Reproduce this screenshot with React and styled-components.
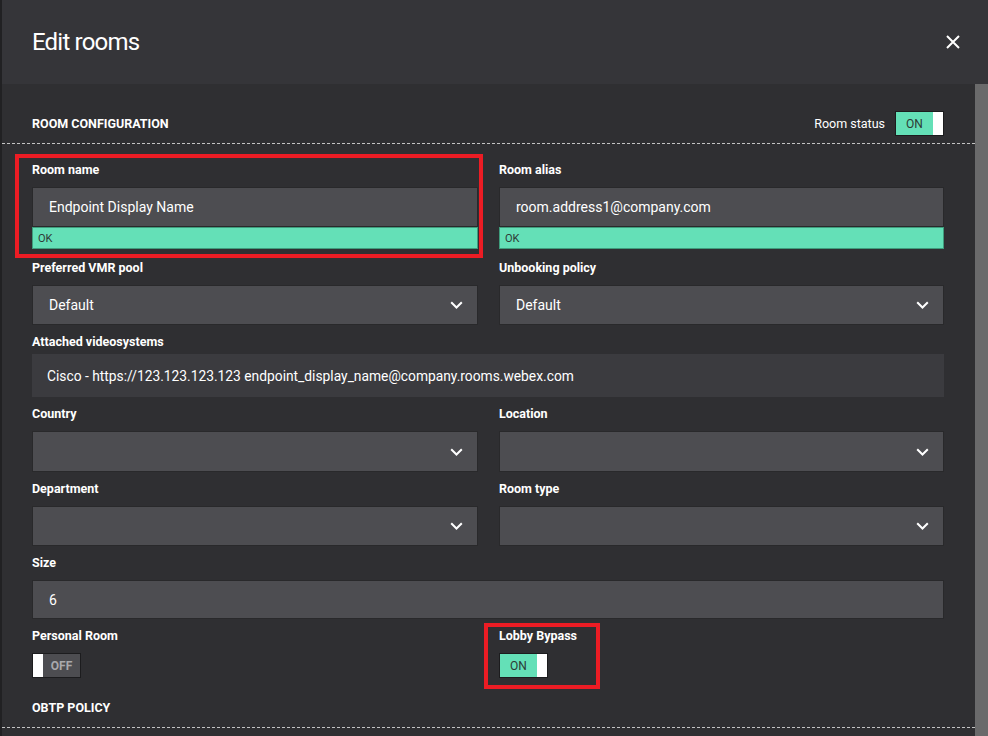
import React from "react";
import styled, { createGlobalStyle } from "styled-components";

const Global = createGlobalStyle`
  html, body { margin: 0; padding: 0; background: #2f2f32; overflow: hidden; }
  body { font-family: Roboto, "Noto Sans", Arial, sans-serif; color: #fff; }
  * { box-sizing: border-box; }
`;

const Page = styled.div`
  display: flex;
  width: 988px;
  height: 736px;
  background: #2f2f32;
`;

const Backdrop = styled.div`
  width: 2px;
  flex: none;
  background: #212123;
`;

const Modal = styled.div`
  flex: 1;
  display: flex;
  flex-direction: column;
  min-width: 0;
`;

const Header = styled.header`
  height: 84px;
  flex: none;
  background: #353539;
  display: flex;
  align-items: center;
  justify-content: space-between;
  padding: 0 28px 0 30px;
`;

const Title = styled.h1`
  margin: 0;
  font-size: 24px;
  font-weight: 400;
  letter-spacing: -0.8px;
  color: #fff;
  line-height: 28px;
`;

const CloseButton = styled.button`
  background: none;
  border: 0;
  padding: 0;
  width: 14px;
  height: 14px;
  display: flex;
  cursor: pointer;
`;

const Body = styled.div`
  flex: 1;
  display: flex;
  min-height: 0;
`;

const Content = styled.div`
  flex: 1;
  min-width: 0;
  overflow: hidden;
`;

const Scrollbar = styled.div`
  width: 13px;
  flex: none;
  background: #6a6a6b;
`;

const SectionHead = styled.div`
  display: flex;
  align-items: center;
  justify-content: space-between;
  padding: ${(p) => p.$pt}px 31px ${(p) => p.$pb}px 30px;
  border-bottom: 1px dashed #c4c4c4;
`;

const SectionTitle = styled.h2`
  margin: 0;
  font-size: 12.5px;
  font-weight: 700;
  text-transform: uppercase;
  color: #fff;
  line-height: 16px;
`;

const StatusGroup = styled.div`
  display: flex;
  align-items: center;
  gap: 10px;
  font-size: 12.5px;
  color: #fff;
`;

const Grid = styled.div`
  display: grid;
  grid-template-columns: 446px 445px;
  column-gap: 21px;
  row-gap: 9px;
  padding: 18px 31px 22px 30px;
`;

const Field = styled.div`
  position: relative;
  grid-column: ${(p) => (p.$wide ? "1 / -1" : "auto")};
  display: flex;
  flex-direction: column;
  align-items: flex-start;
`;

const Highlight = styled.div`
  position: absolute;
  left: ${(p) => p.$l}px;
  top: ${(p) => p.$t}px;
  width: ${(p) => p.$w}px;
  height: ${(p) => p.$h}px;
  border: 4px solid #ec1c24;
  pointer-events: none;
`;

const Label = styled.label`
  font-size: 12.5px;
  font-weight: 700;
  line-height: 16px;
  color: #fff;
  margin-bottom: ${(p) => p.$mb ?? 9}px;
`;

const Input = styled.div`
  width: 100%;
  height: ${(p) => p.$h ?? 40}px;
  flex: none;
  background: #4d4d51;
  border: 1px solid #29292b;
  display: flex;
  align-items: center;
  justify-content: space-between;
  padding: 0 14px 0 16px;
  font-size: 14px;
  color: #fff;
`;

const Chevron = styled.svg`
  width: 13px;
  height: 8px;
  flex: none;
`;

const StaticBox = styled.div`
  width: 100%;
  height: 43px;
  background: #3b3b3f;
  display: flex;
  align-items: center;
  padding: 0 15px;
  font-size: 13.8px;
  color: #fff;
`;

const Status = styled.div`
  width: 100%;
  height: 22px;
  background: #64e0b7;
  border: 1px solid #3f9c7c;
  display: flex;
  align-items: center;
  padding: 0 5px;
  font-size: 11px;
  color: #2f3a36;
  margin-bottom: 2px;
`;

const Toggle = styled.div`
  width: 49px;
  height: 25px;
  border: 1px solid #1c1c1e;
  display: flex;
  flex-direction: ${(p) => (p.$on ? "row" : "row-reverse")};
  background: ${(p) => (p.$on ? "#64e0b7" : "#4d4d51")};
`;

const ToggleText = styled.span`
  flex: 1;
  display: flex;
  align-items: center;
  justify-content: center;
  font-size: 12px;
  font-weight: ${(p) => (p.$on ? 400 : 700)};
  color: ${(p) => (p.$on ? "#2d3a35" : "#a9a9ac")};
`;

const Knob = styled.span`
  width: 10px;
  flex: none;
  background: #fff;
`;

const Switch = ({ on }) => (
  <Toggle $on={on}>
    <ToggleText $on={on}>{on ? "ON" : "OFF"}</ToggleText>
    <Knob />
  </Toggle>
);

const ChevronIcon = () => (
  <Chevron viewBox="0 0 13 8">
    <path d="M1.2 1.2 L6.5 6.5 L11.8 1.2" fill="none" stroke="#fff" strokeWidth="2" />
  </Chevron>
);

const Select = ({ value, h }) => (
  <Input $h={h}>
    <span>{value}</span>
    <ChevronIcon />
  </Input>
);

export default function App() {
  return (
    <>
      <Global />
      <Page>
        <Backdrop />
        <Modal>
          <Header>
            <Title>Edit rooms</Title>
            <CloseButton aria-label="Close">
              <svg width="14" height="14" viewBox="0 0 14 14">
                <path d="M1 1 L13 13 M13 1 L1 13" stroke="#fff" strokeWidth="2" fill="none" />
              </svg>
            </CloseButton>
          </Header>
          <Body>
            <Content>
              <SectionHead $pt={27} $pb={7}>
                <SectionTitle>Room configuration</SectionTitle>
                <StatusGroup>
                  Room status
                  <Switch on />
                </StatusGroup>
              </SectionHead>
              <Grid>
                <Field>
                  <Highlight $l={-17} $t={-8} $w={468} $h={104} />
                  <Label>Room name</Label>
                  <Input $h={40}>Endpoint Display Name</Input>
                  <Status>OK</Status>
                </Field>
                <Field>
                  <Label>Room alias</Label>
                  <Input $h={40}>room.address1@company.com</Input>
                  <Status>OK</Status>
                </Field>
                <Field>
                  <Label>Preferred VMR pool</Label>
                  <Select value="Default" h={40} />
                </Field>
                <Field>
                  <Label>Unbooking policy</Label>
                  <Select value="Default" h={40} />
                </Field>
                <Field $wide>
                  <Label $mb={4}>Attached videosystems</Label>
                  <StaticBox>
                    Cisco - https://123.123.123.123 endpoint_display_name@company.rooms.webex.com
                  </StaticBox>
                </Field>
                <Field>
                  <Label>Country</Label>
                  <Select value="" h={41} />
                </Field>
                <Field>
                  <Label>Location</Label>
                  <Select value="" h={41} />
                </Field>
                <Field>
                  <Label>Department</Label>
                  <Select value="" h={40} />
                </Field>
                <Field>
                  <Label>Room type</Label>
                  <Select value="" h={40} />
                </Field>
                <Field $wide>
                  <Label>Size</Label>
                  <Input $h={39}>6</Input>
                </Field>
                <Field>
                  <Label>Personal Room</Label>
                  <Switch on={false} />
                </Field>
                <Field>
                  <Highlight $l={-15} $t={-5} $w={116} $h={66} />
                  <Label>Lobby Bypass</Label>
                  <Switch on />
                </Field>
              </Grid>
              <SectionHead $pt={0} $pb={11}>
                <SectionTitle>OBTP policy</SectionTitle>
              </SectionHead>
            </Content>
            <Scrollbar />
          </Body>
        </Modal>
      </Page>
    </>
  );
}
